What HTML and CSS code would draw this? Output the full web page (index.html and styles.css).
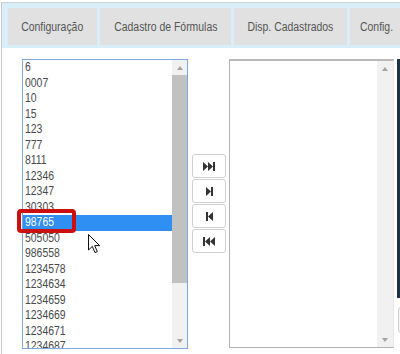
FILE: index.html
```html
<!DOCTYPE html>
<html lang="pt">
<head>
<meta charset="utf-8">
<link rel="stylesheet" href="styles.css">
</head>
<body>
<div class="frame">
  <div class="tabbar">
    <div class="tab w1"><span class="t">Configuração</span></div>
    <div class="tab w2"><span class="t">Cadastro de Fórmulas</span></div>
    <div class="tab w3"><span class="t">Disp. Cadastrados</span></div>
    <div class="tab w4"><span class="t">Config.</span></div>
  </div>
  <div class="main">
    <div class="listbox left">
      <div class="items">
        <div class="item"><span class="t">6</span></div>
        <div class="item"><span class="t">0007</span></div>
        <div class="item"><span class="t">10</span></div>
        <div class="item"><span class="t">15</span></div>
        <div class="item"><span class="t">123</span></div>
        <div class="item"><span class="t">777</span></div>
        <div class="item"><span class="t">8111</span></div>
        <div class="item"><span class="t">12346</span></div>
        <div class="item"><span class="t">12347</span></div>
        <div class="item"><span class="t">30303</span></div>
        <div class="item sel"><span class="t">98765</span></div>
        <div class="item"><span class="t">505050</span></div>
        <div class="item"><span class="t">986558</span></div>
        <div class="item"><span class="t">1234578</span></div>
        <div class="item"><span class="t">1234634</span></div>
        <div class="item"><span class="t">1234659</span></div>
        <div class="item"><span class="t">1234669</span></div>
        <div class="item"><span class="t">1234671</span></div>
        <div class="item"><span class="t">1234687</span></div>
      </div>
      <div class="sb">
        <div class="arr"><i class="up"></i></div>
        <div class="thumb"></div>
        <div class="track"></div>
        <div class="arr"><i class="down"></i></div>
      </div>
    </div>
    <div class="btns">
      <button class="btn"><svg width="12" height="9" viewBox="0 0 12 9"><path d="M0 0L5 4.5L0 9ZM5 0L10 4.5L5 9Z"/><rect x="10" y="0" width="2" height="9"/></svg></button>
      <button class="btn"><svg width="7" height="9" viewBox="0 0 7 9"><path d="M0 0L5 4.5L0 9Z"/><rect x="5" y="0" width="2" height="9"/></svg></button>
      <button class="btn"><svg width="7" height="9" viewBox="0 0 7 9"><rect x="0" y="0" width="2" height="9"/><path d="M7 0L2 4.5L7 9Z"/></svg></button>
      <button class="btn"><svg width="12" height="9" viewBox="0 0 12 9"><rect x="0" y="0" width="2" height="9"/><path d="M7 0L2 4.5L7 9ZM12 0L7 4.5L12 9Z"/></svg></button>
    </div>
    <div class="listbox right">
      <div class="items"></div>
      <div class="sb plain">
        <div class="arr"><i class="up"></i></div>
        <div class="track"></div>
        <div class="arr"><i class="down"></i></div>
      </div>
    </div>
    <div class="edge">
      <div class="darkbar"></div>
      <div class="stub"></div>
    </div>
  </div>
</div>
<div class="annot"></div>
<svg class="cursor" width="13" height="20" viewBox="0 0 13 20"><path d="M0.5 0.5L0.5 16L4.3 12.4L7 18.6L9.3 17.6L6.7 11.6L11.6 11.6Z" fill="#fff" stroke="#111" stroke-width="1" stroke-linejoin="round"/></svg>
</body>
</html>
```
FILE: styles.css
```css
html, body {
  margin: 0;
  padding: 0;
  background: #fff;
  width: 400px;
  height: 354px;
  overflow: hidden;
  font-family: "Liberation Sans", Arial, sans-serif;
}
.frame {
  margin: 2px 0 0 1px;
  border-left: 1px solid #c9c9c9;
  border-top: 1px solid #d0d0d0;
  height: 360px;
}
.t {
  display: inline-block;
  transform: scaleX(0.835);
  transform-origin: left center;
  white-space: nowrap;
}
.tabbar {
  display: flex;
  gap: 3px;
  background: #d8eef8;
  padding: 5px 0 3px 6px;
  overflow: hidden;
}
.tab {
  flex: none;
  height: 37px;
  background: #e1e1e1;
  color: #555;
  font-size: 12.5px;
  display: flex;
  align-items: center;
  justify-content: center;
}
.tab .t { transform-origin: center center; }
.w1 { width: 89px; }
.w2 { width: 131px; }
.w3 { width: 113px; }
.w4 { width: 70px; justify-content: flex-start; padding-left: 10px; }
.w4 .t { transform-origin: left center; }
.main {
  display: flex;
  align-items: flex-start;
  padding: 11px 0 0 20px;
}
.listbox {
  box-sizing: border-box;
  display: flex;
  background: #fff;
  overflow: hidden;
  flex: none;
}
.listbox.left {
  width: 166px;
  height: 290px;
  border: 1px solid #7da6e2;
}
.listbox.right {
  width: 165px;
  height: 289px;
  margin-left: 3px;
  border: 1px solid #b3b3b3;
  border-top: 2px solid #b9b9b9;
  border-right: 1px solid #e8e8e8;
}
.items {
  flex: 1;
  overflow: hidden;
}
.item {
  height: 15.5px;
  line-height: 15.5px;
  font-size: 12.5px;
  color: #4a4a4a;
  padding-left: 2px;
}
.item.sel {
  background: #2f8ff2;
  color: #fff;
}
.sb {
  width: 15px;
  flex: none;
  display: flex;
  flex-direction: column;
  background: #f1f1f1;
}
.sb.plain { width: 16px; }
.arr {
  height: 15px;
  flex: none;
  display: flex;
  align-items: center;
  justify-content: center;
}
.arr i {
  display: block;
  width: 0;
  height: 0;
  border-left: 3.5px solid transparent;
  border-right: 3.5px solid transparent;
}
.arr i.up { border-bottom: 4px solid #a3a3a3; }
.arr i.down { border-top: 4px solid #a3a3a3; }
.thumb {
  height: 208px;
  background: #c1c1c1;
  flex: none;
}
.track { flex: 1; }
.btns {
  flex: none;
  display: flex;
  flex-direction: column;
  gap: 1px;
  margin: 95px 0 0 4px;
}
.btn {
  box-sizing: border-box;
  width: 34px;
  height: 24px;
  padding: 0;
  background: #fff;
  border: 1px solid #d0d0d0;
  border-radius: 3px;
  display: flex;
  align-items: center;
  justify-content: center;
}
.btn svg { fill: #333; display: block; }
.edge {
  flex: none;
  margin-left: 3px;
  display: flex;
  flex-direction: column;
}
.darkbar {
  width: 3px;
  height: 239px;
  background: #1f3346;
}
.stub {
  margin-top: 9px;
  width: 12px;
  height: 26px;
  box-sizing: border-box;
  border: 1px solid #cfcfcf;
  border-radius: 3px;
  background: #f6f6f6;
  margin-left: 1px;
}
.annot {
  position: absolute;
  left: 17px;
  top: 209px;
  width: 59px;
  height: 24px;
  box-sizing: border-box;
  border: 4px solid #cc1010;
  border-radius: 4px;
}
.cursor {
  position: absolute;
  left: 88px;
  top: 234px;
}
```
